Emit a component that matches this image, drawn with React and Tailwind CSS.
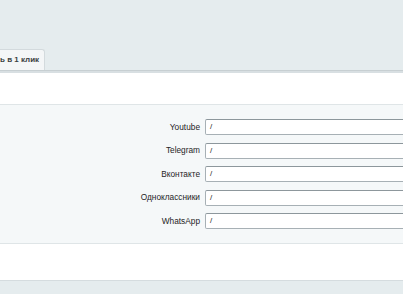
export default function App() {
  const rows = ["Youtube", "Telegram", "Вконтакте", "Одноклассники", "WhatsApp"];
  return (
    <div className="w-[403px] h-[294px] overflow-hidden bg-[#e5ecee] flex flex-col" style={{ fontFamily: '"Liberation Sans", Arial, sans-serif' }}>
      <div className="h-[49px] shrink-0" />
      <div className="flex h-[21px] shrink-0">
        <div className="w-[45px] h-[21px] bg-[#f4f6f7] border-r border-t border-[#d3dadd] rounded-tr-[3px] flex items-center text-[8px] font-bold text-[#3a3f41] whitespace-nowrap">
          ь в 1 клик
        </div>
      </div>
      <div className="h-[3px] shrink-0 bg-[#d8dfe2] border-t border-[#c7cfd2]" />
      <div className="bg-white flex flex-col shrink-0">
        <div className="h-[31px]" />
        <div className="bg-[#f5f8f9] border-t border-b border-[#dfe5e7] pt-[14px] pb-[14px] flex flex-col gap-[7.5px]">
          {rows.map((r) => (
            <div key={r} className="flex items-center h-[16px]">
              <div className="w-[205px] pr-[5px] text-right text-[8.3px] text-[#1f2426] whitespace-nowrap">{r}</div>
              <div className="flex-1 h-[16px] -mr-[10px] bg-white border border-[#a7b0b5] border-t-[#8d979c] rounded-[2px] flex items-center pl-[4px] text-[8px] text-[#222]">
                /
              </div>
            </div>
          ))}
        </div>
        <div className="h-[36px]" />
      </div>
      <div className="flex-1 border-t border-[#d5dcdf] bg-[#e5ecee]" />
    </div>
  );
}
